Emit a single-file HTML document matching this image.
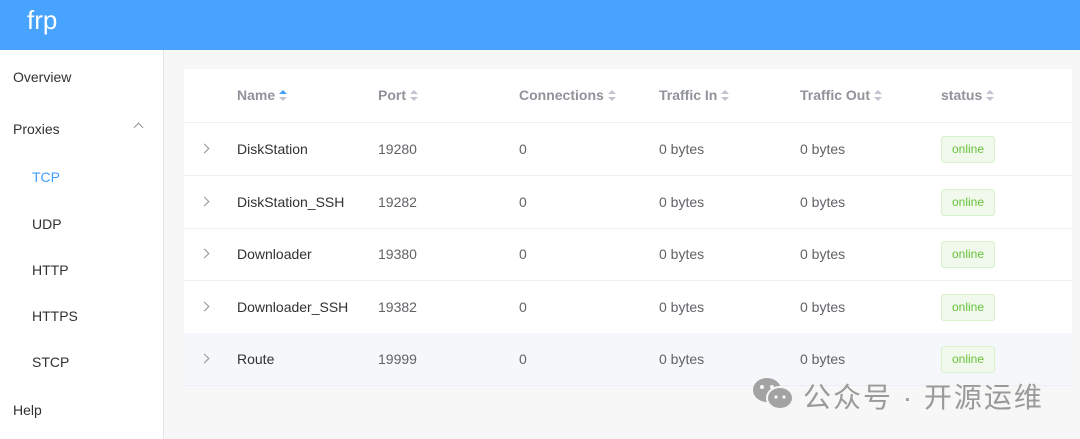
<!DOCTYPE html><html><head><meta charset="utf-8"><style>
*{margin:0;padding:0;box-sizing:border-box}
body{width:1080px;height:439px;overflow:hidden;background:#f7f7f7;font-family:"Liberation Sans","Noto Sans CJK SC",sans-serif;position:relative;color:#606266}
.hd{position:absolute;left:0;top:0;width:1080px;height:50px;background:#48a3ff}
.hd span{position:absolute;left:27px;top:5px;color:#fff;font-size:26px}
.sb{position:absolute;left:0;top:50px;width:164px;height:389px;background:#fff;border-right:1px solid #e6e6e6}
.sb div{position:absolute;font-size:14px;color:#303133}
.card{position:absolute;left:184px;top:69px;width:888px;height:316px;background:#fff}
.row{position:absolute;left:0;width:888px;height:53px;border-bottom:1px solid #ebeef5;font-size:14px}
.row span{position:absolute;top:18px}
.h span{color:#909399;font-weight:bold;top:18px}
.tag{position:absolute;left:757px;top:13px;width:54px;height:27px;border:1px solid #d8f2cd;background:#f0f9eb;color:#67c23a;font-size:12px;text-align:center;line-height:25px;border-radius:3px}
.car{display:inline-block;vertical-align:middle;margin-left:4px;width:8px;height:12px;position:relative}
.car:before{content:"";position:absolute;left:0;top:0;border:4px solid transparent;border-bottom-color:#c0c4cc;border-top:0}
.car:after{content:"";position:absolute;left:0;top:7px;border:4px solid transparent;border-top-color:#c0c4cc;border-bottom:0}
.car.a:before{border-bottom-color:#409eff}
.arr{position:absolute;left:17px;top:22px;width:7px;height:7px;border-right:1px solid #909399;border-top:1px solid #909399;transform:rotate(45deg)}
.wm{position:absolute;left:803px;top:376px;font-size:28px;color:#9a9a9a;letter-spacing:2px}
</style></head><body>
<div class="hd"><span>frp</span></div>
<div class="sb">
<div style="left:13px;top:19px">Overview</div>
<div style="left:13px;top:71px">Proxies</div>
<div style="left:135px;top:74px;width:7px;height:7px;border-left:1px solid #909399;border-top:1px solid #909399;transform:rotate(45deg)"></div>
<div style="left:32px;top:119px;color:#409eff">TCP</div>
<div style="left:32px;top:166px">UDP</div>
<div style="left:32px;top:212px">HTTP</div>
<div style="left:32px;top:258px">HTTPS</div>
<div style="left:32px;top:304px">STCP</div>
<div style="left:13px;top:352px">Help</div>
</div>
<div class="card">
<div class="row h" style="top:0;height:54px"><span style="left:53px">Name<i class="car a"></i></span><span style="left:194px">Port<i class="car"></i></span><span style="left:335px">Connections<i class="car"></i></span><span style="left:475px">Traffic In<i class="car"></i></span><span style="left:616px">Traffic Out<i class="car"></i></span><span style="left:757px">status<i class="car"></i></span></div>
<div class="row" style="top:54px"><i class="arr"></i><span style="left:53px;color:#303133">DiskStation</span><span style="left:194px">19280</span><span style="left:335px">0</span><span style="left:475px">0 bytes</span><span style="left:616px">0 bytes</span><div class="tag">online</div></div>
<div class="row" style="top:107px"><i class="arr"></i><span style="left:53px;color:#303133">DiskStation_SSH</span><span style="left:194px">19282</span><span style="left:335px">0</span><span style="left:475px">0 bytes</span><span style="left:616px">0 bytes</span><div class="tag">online</div></div>
<div class="row" style="top:159px"><i class="arr"></i><span style="left:53px;color:#303133">Downloader</span><span style="left:194px">19380</span><span style="left:335px">0</span><span style="left:475px">0 bytes</span><span style="left:616px">0 bytes</span><div class="tag">online</div></div>
<div class="row" style="top:212px"><i class="arr"></i><span style="left:53px;color:#303133">Downloader_SSH</span><span style="left:194px">19382</span><span style="left:335px">0</span><span style="left:475px">0 bytes</span><span style="left:616px">0 bytes</span><div class="tag">online</div></div>
<div class="row" style="top:264px;background:#f5f7fa"><i class="arr"></i><span style="left:53px;color:#303133">Route</span><span style="left:194px">19999</span><span style="left:335px">0</span><span style="left:475px">0 bytes</span><span style="left:616px">0 bytes</span><div class="tag">online</div></div>
</div>
<svg style="position:absolute;left:752px;top:377px" width="43" height="34" viewBox="0 0 43 34"><ellipse cx="15" cy="13" rx="14" ry="12" fill="#a3a3a3"/><ellipse cx="28" cy="21" rx="13" ry="11" fill="#a3a3a3" stroke="#f7f7f7" stroke-width="2"/><circle cx="10" cy="10" r="2" fill="#f7f7f7"/><circle cx="20" cy="10" r="2" fill="#f7f7f7"/><circle cx="24" cy="20" r="1.6" fill="#f7f7f7"/><circle cx="32" cy="20" r="1.6" fill="#f7f7f7"/></svg>
<div class="wm">公众号 · 开源运维</div>
</body></html>
